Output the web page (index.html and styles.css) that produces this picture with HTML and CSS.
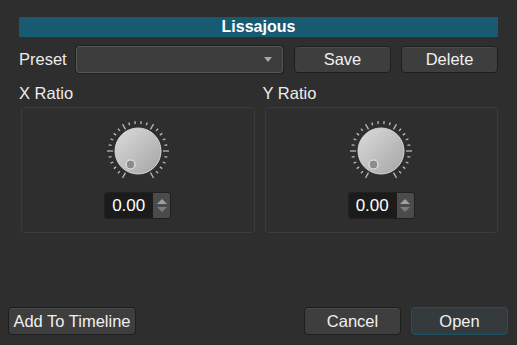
FILE: index.html
```html
<!DOCTYPE html>
<html lang="en">
<head>
    <meta charset="UTF-8">
    <title>Lissajous</title>
    <link rel="stylesheet" href="styles.css">
</head>
<body>
    <svg class="defs" width="0" height="0">
        <defs>
            <linearGradient id="knob-fill" x1="0" y1="0" x2="1" y2="1">
                <stop offset="0" stop-color="#dcdcdc"/>
                <stop offset="1" stop-color="#a4a4a4"/>
            </linearGradient>
            <line id="tick" x1="0" y1="-27" x2="0" y2="-30"/>
            <line id="major" x1="0" y1="-25" x2="0" y2="-31"/>
            <symbol id="knob" viewBox="-35 -35 70 70">
                <g class="ticks">
                    <use href="#major" transform="rotate(-150)"/>
                    <use href="#tick" transform="rotate(-138)"/>
                    <use href="#tick" transform="rotate(-126)"/>
                    <use href="#tick" transform="rotate(-114)"/>
                    <use href="#tick" transform="rotate(-102)"/>
                    <use href="#major" transform="rotate(-90)"/>
                    <use href="#tick" transform="rotate(-78)"/>
                    <use href="#tick" transform="rotate(-66)"/>
                    <use href="#tick" transform="rotate(-54)"/>
                    <use href="#tick" transform="rotate(-42)"/>
                    <use href="#major" transform="rotate(-30)"/>
                    <use href="#tick" transform="rotate(-18)"/>
                    <use href="#tick" transform="rotate(-6)"/>
                    <use href="#tick" transform="rotate(6)"/>
                    <use href="#tick" transform="rotate(18)"/>
                    <use href="#major" transform="rotate(30)"/>
                    <use href="#tick" transform="rotate(42)"/>
                    <use href="#tick" transform="rotate(54)"/>
                    <use href="#tick" transform="rotate(66)"/>
                    <use href="#tick" transform="rotate(78)"/>
                    <use href="#major" transform="rotate(90)"/>
                    <use href="#tick" transform="rotate(102)"/>
                    <use href="#tick" transform="rotate(114)"/>
                    <use href="#tick" transform="rotate(126)"/>
                    <use href="#tick" transform="rotate(138)"/>
                    <use href="#major" transform="rotate(150)"/>
                </g>
                <circle r="23" fill="url(#knob-fill)" stroke="#d6d6d6" stroke-width="1"/>
                <circle cx="-7.5" cy="13.5" r="4.5" fill="#8c8c8c" stroke="#e8e8e8" stroke-width="1.2"/>
            </symbol>
        </defs>
    </svg>

    <div class="dialog">
        <div class="title">Lissajous</div>

        <div class="preset-row">
            <span class="preset-label">Preset</span>
            <div class="combo"><span class="combo-arrow"></span></div>
            <button class="btn preset-btn">Save</button>
            <button class="btn preset-btn">Delete</button>
        </div>

        <div class="ratios">
            <div class="ratio">
                <div class="ratio-label">X Ratio</div>
                <div class="group">
                    <svg class="knob" width="70" height="70"><use href="#knob"/></svg>
                    <div class="spin">
                        <span class="spin-value">0.00</span>
                        <span class="spin-arrows"><i class="up"></i><i class="down"></i></span>
                    </div>
                </div>
            </div>
            <div class="ratio">
                <div class="ratio-label">Y Ratio</div>
                <div class="group">
                    <svg class="knob" width="70" height="70"><use href="#knob"/></svg>
                    <div class="spin">
                        <span class="spin-value">0.00</span>
                        <span class="spin-arrows"><i class="up"></i><i class="down"></i></span>
                    </div>
                </div>
            </div>
        </div>

        <div class="footer">
            <button class="btn add-btn">Add To Timeline</button>
            <div class="footer-right">
                <button class="btn footer-btn">Cancel</button>
                <button class="btn footer-btn open-btn">Open</button>
            </div>
        </div>
    </div>
</body>
</html>
```

FILE: styles.css
```css
body {
    margin: 0;
    background-color: #2e2e2e;
    color: #ececec;
    font-family: "Liberation Sans", Arial, sans-serif;
    font-size: 16.5px;
}

.defs {
    position: absolute;
}

.dialog {
    height: 345px;
    box-sizing: border-box;
    padding-top: 17px;
    display: flex;
    flex-direction: column;
}

.title {
    margin: 0 19px;
    height: 20px;
    line-height: 20px;
    background-color: #185a72;
    color: #fff;
    font-size: 16px;
    font-weight: bold;
    text-align: center;
}

/* ряд с пресетами */
.preset-row {
    display: flex;
    align-items: center;
    height: 27px;
    margin: 9px 19px 0 19px;
}

.preset-label {
    width: 57px;
}

.combo {
    width: 205px;
    height: 25px;
    background-color: #3c3c3c;
    border: 1px solid #585858;
    border-radius: 3px;
    box-shadow: 0 0 0 1px #1f1f1f;
    display: flex;
    align-items: center;
    justify-content: flex-end;
    margin-right: 11px;
}

.combo-arrow {
    width: 0;
    height: 0;
    border-left: 4px solid transparent;
    border-right: 4px solid transparent;
    border-top: 5px solid #a8a8a8;
    margin-right: 10px;
}

.btn {
    font-family: inherit;
    font-size: 16.5px;
    color: #f0f0f0;
    background-color: #3e3e3e;
    border: 1px solid #1e1e1e;
    border-radius: 4px;
    box-shadow: inset 0 1px 0 #4a4a4a;
    padding: 0;
    height: 27px;
}

.preset-btn {
    width: 97px;
    margin-left: 10px;
}

.preset-btn:first-of-type {
    margin-left: 0;
}

/* блоки с ручками */
.ratios {
    display: flex;
    gap: 8px;
    margin: 11px 19px 0 19px;
}

.ratio {
    flex: 1;
}

.ratio-label {
    line-height: 18px;
    margin-bottom: 5px;
}

.group {
    margin-left: 2px;
    height: 124px;
    border: 1px solid #3b3b3b;
    border-radius: 3px;
    display: flex;
    flex-direction: column;
    align-items: center;
}

.knob {
    display: block;
    margin-top: 8px;
}

.ticks {
    stroke: #b8b8b8;
    stroke-width: 1.3;
}

.spin {
    margin-top: 6px;
    display: flex;
    height: 25px;
    border: 1px solid #202020;
    border-radius: 3px;
    overflow: hidden;
}

.spin-value {
    width: 48px;
    background-color: #1b1b1b;
    color: #fff;
    font-size: 17px;
    line-height: 25px;
    text-align: right;
    box-sizing: border-box;
    padding-right: 8px;
}

.spin-arrows {
    width: 17px;
    background-color: #4b4b4b;
    display: flex;
    flex-direction: column;
    align-items: center;
    justify-content: center;
    gap: 3px;
}

.spin-arrows i {
    width: 0;
    height: 0;
    border-left: 5px solid transparent;
    border-right: 5px solid transparent;
}

.spin-arrows .up {
    border-bottom: 5px solid #a0a0a0;
}

.spin-arrows .down {
    border-top: 5px solid #7c7c7c;
}

/* нижние кнопки */
.footer {
    margin-top: auto;
    display: flex;
    justify-content: space-between;
    padding: 0 9px 10px 8px;
}

.add-btn {
    width: 128px;
    height: 28px;
}

.footer-right {
    display: flex;
    gap: 10px;
}

.footer-btn {
    width: 97px;
    height: 28px;
}

.open-btn {
    background-color: #353b3d;
    border-color: #1c5466;
    box-shadow: none;
}
```
